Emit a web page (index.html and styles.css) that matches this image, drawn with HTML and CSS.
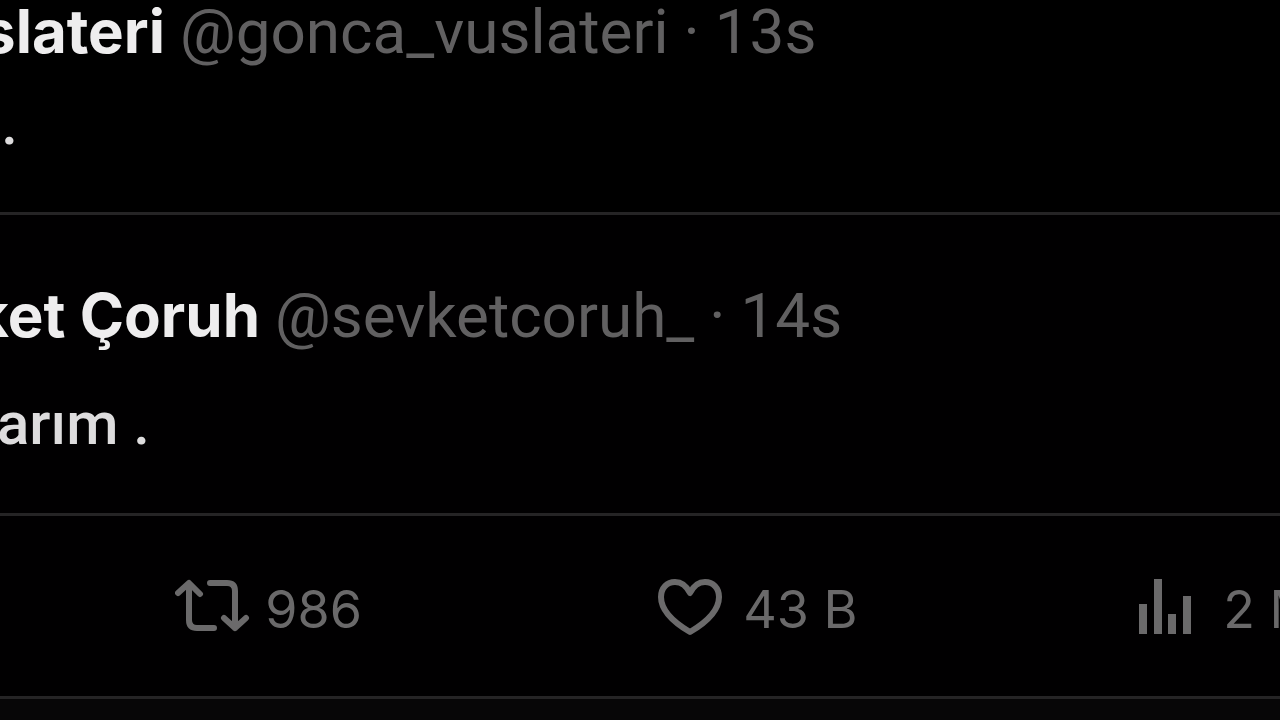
FILE: index.html
```html
<!DOCTYPE html>
<html lang="tr">
<head>
<meta charset="utf-8">
<title>Gönderiler</title>
<link rel="stylesheet" href="styles.css">
</head>
<body>
<main class="feed">
  <article class="post post-first">
    <header class="post-head">
      <strong class="name name-short"><span>slateri</span></strong>
      <span class="meta">@gonca_vuslateri</span>
      <span class="meta">·</span>
      <time class="meta">13s</time>
    </header>
    <p class="post-body body-short"><span>.</span></p>
  </article>
  <article class="post post-second">
    <header class="post-head">
      <strong class="name name-long"><span>ket Çoruh</span></strong>
      <span class="meta">@sevketcoruh_</span>
      <span class="meta">·</span>
      <time class="meta">14s</time>
    </header>
    <p class="post-body body-long"><span>arım .</span></p>
  </article>
  <div class="stats">
    <button class="stat" type="button" aria-label="986 yeniden gönderi">
      <svg class="icon repost" viewBox="0 0 76 60" aria-hidden="true">
        <path d="M3 15L14 5L25 16M14 6V42Q14 50 22 50H39M35 5H52Q60 5 60 13V50M49 40L60 50L71 40"/>
      </svg>
      <span>986</span>
    </button>
    <button class="stat" type="button" aria-label="43 B beğeni">
      <svg class="icon heart" viewBox="0 0 72 60" aria-hidden="true">
        <path d="M33 15C29 7 24 4 18 4C10 4 4 10 4 19C4 33 16 44 33 54C50 44 62 33 62 19C62 10 56 4 48 4C42 4 37 7 33 15Z"/>
      </svg>
      <span>43 B</span>
    </button>
    <button class="stat" type="button" aria-label="2 M görüntülenme">
      <svg class="icon bars" viewBox="0 0 70 60" aria-hidden="true">
        <path d="M4 26V56M19 1V56M33 36V56M48 18V56"/>
      </svg>
      <span>2 M</span>
    </button>
  </div>
</main>
</body>
</html>
```
FILE: styles.css
```css
* {
  box-sizing: border-box;
}

body {
  margin: 0;
  min-height: 100vh;
  background: #070607;
  font-family: Roboto, "Liberation Sans", sans-serif;
  overflow: hidden;
}

.feed {
  background: #010001;
  overflow: hidden;
}

.post,
.stats {
  border-bottom: 3px solid #252425;
}

.post-first {
  background: #000;
  padding-bottom: 57px;
}

.post-second {
  padding-top: 69px;
  padding-bottom: 58px;
}

.post-head {
  display: flex;
  align-items: baseline;
  gap: 15px;
  font-size: 62px;
  line-height: 62px;
  white-space: nowrap;
}

.name {
  display: flex;
  justify-content: flex-end;
  font-family: Inter, "Liberation Sans", sans-serif;
  font-size: 60px;
  font-weight: 700;
  color: #eeedee;
}

.name-short {
  width: 165px;
}

.name-long {
  width: 260px;
}

.meta {
  color: #616061;
}

.post-body {
  display: flex;
  justify-content: flex-end;
  margin: 0;
  font-size: 60px;
  font-weight: 500;
  line-height: 62px;
  white-space: nowrap;
  color: #dddcdd;
}

.body-short {
  width: 18px;
  margin-top: 30px;
}

.body-long {
  width: 150px;
  margin-top: 46px;
}

.stats {
  display: grid;
  grid-template-columns: repeat(3, 37.65vw);
  padding: 62px 0 54px 13.7%;
}

.stat {
  display: flex;
  align-items: flex-start;
  gap: 14px;
  padding: 0;
  border: 0;
  background: none;
  color: #6a696a;
  font-family: Inter, "Liberation Sans", sans-serif;
  font-size: 52px;
  line-height: 64px;
  white-space: nowrap;
}

.icon {
  flex: none;
  height: 60px;
  fill: none;
  stroke: #6b6a6b;
  stroke-width: 6;
  stroke-linecap: round;
  stroke-linejoin: round;
}

.repost {
  width: 76px;
}

.heart {
  width: 72px;
}

.bars {
  width: 70px;
  stroke-width: 8;
  stroke-linecap: butt;
}
```
